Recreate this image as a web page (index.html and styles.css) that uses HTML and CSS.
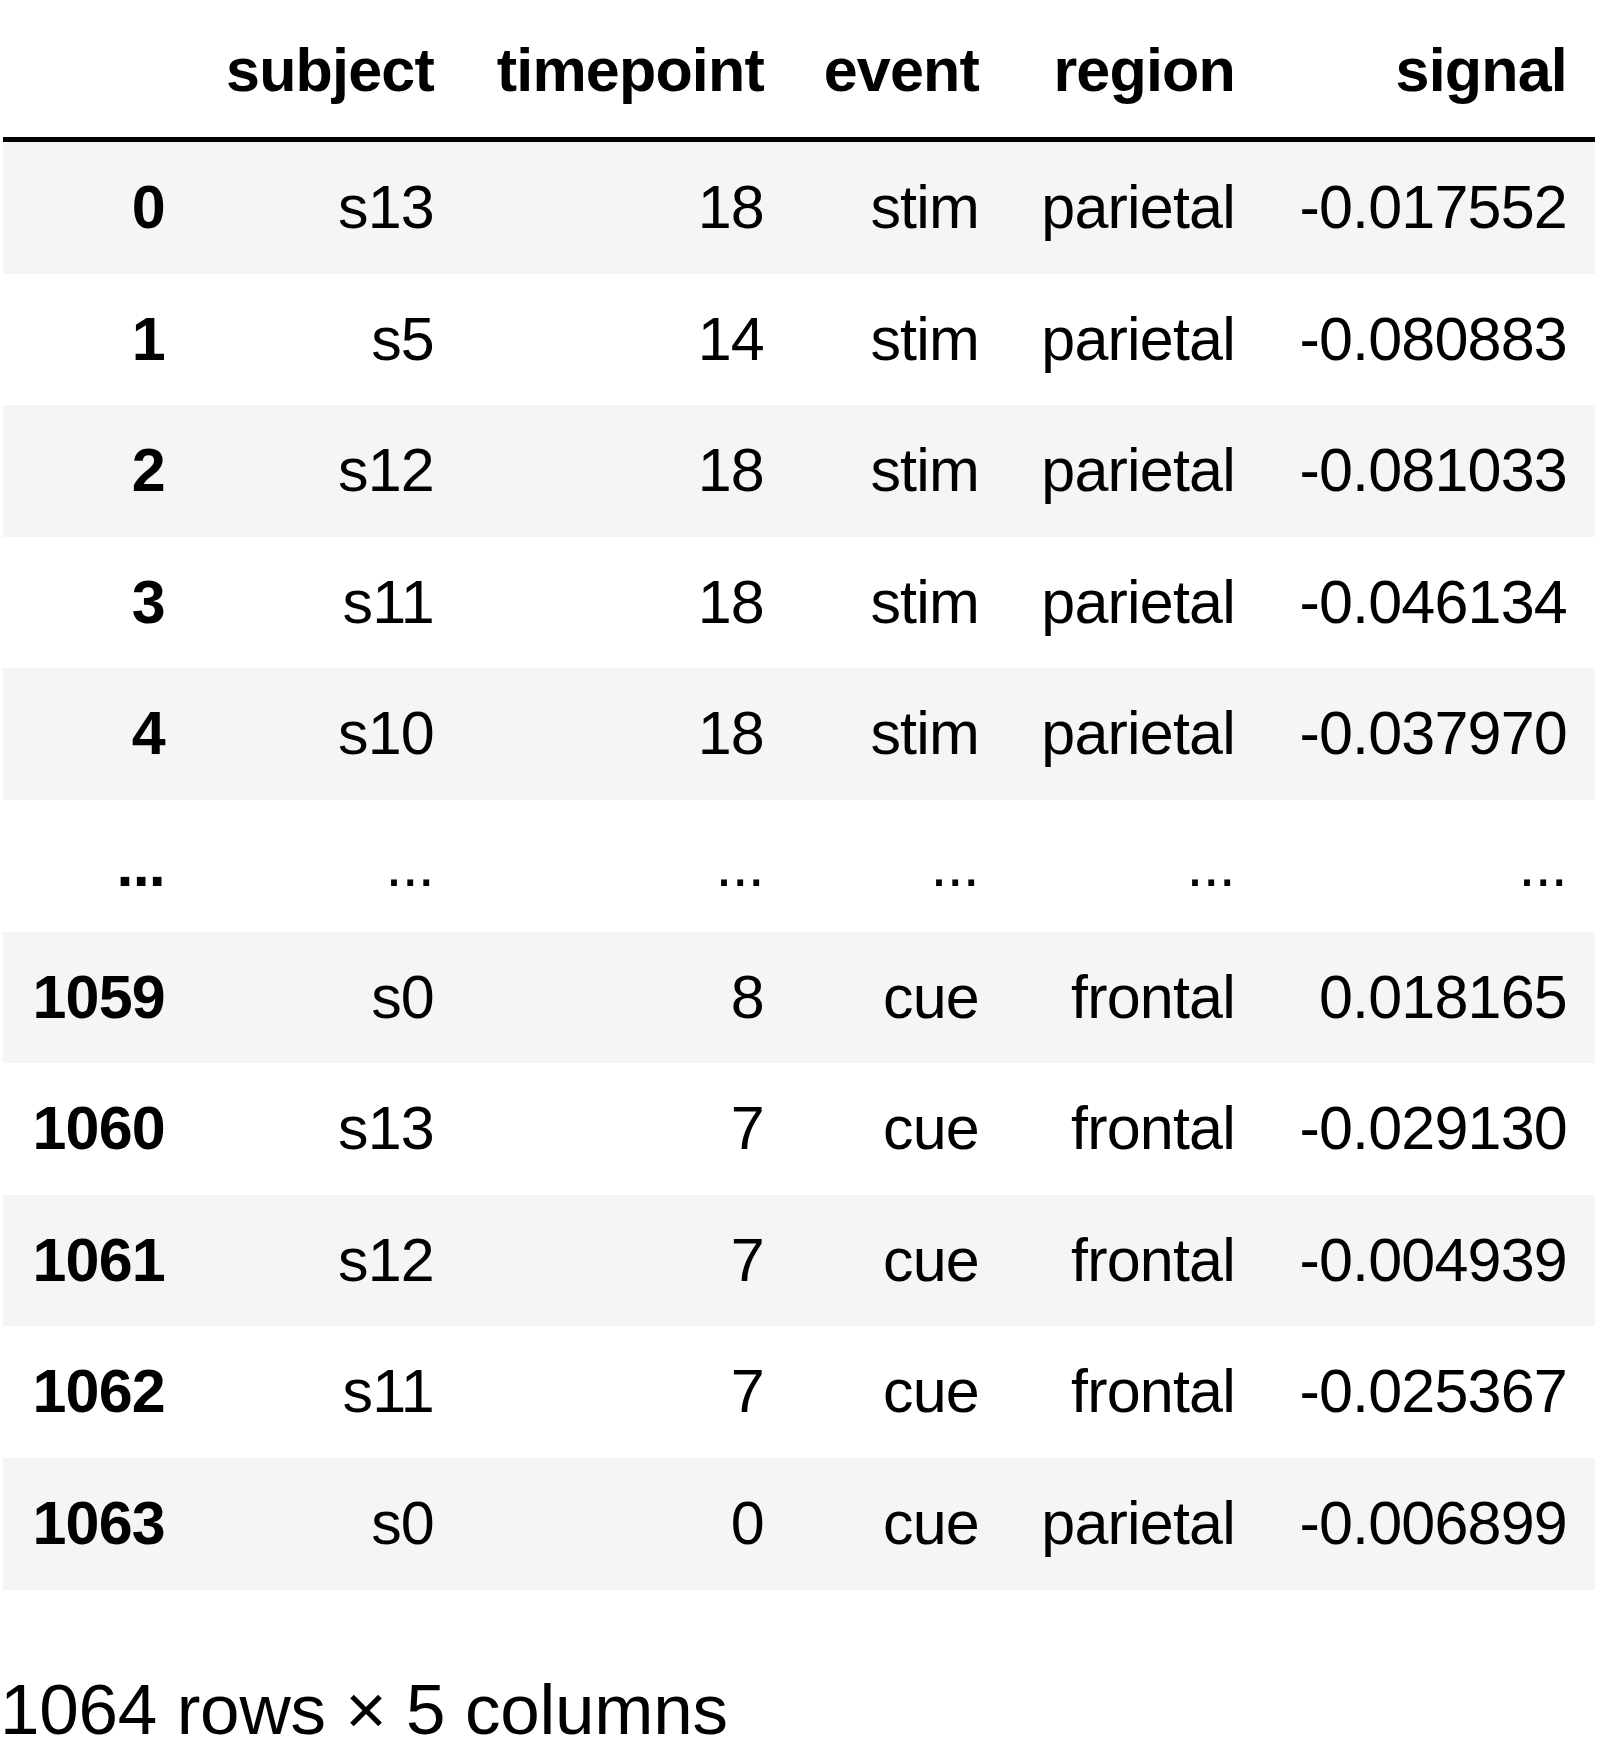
FILE: index.html
```html
<!DOCTYPE html>
<html>
<head>
<meta charset="utf-8">
<link rel="stylesheet" href="styles.css">
</head>
<body>
<div class="output">
<table class="dataframe">
  <colgroup>
    <col class="c-idx"><col class="c-subject"><col class="c-time"><col class="c-event"><col class="c-region"><col class="c-signal">
  </colgroup>
  <thead>
    <tr><th></th><th>subject</th><th>timepoint</th><th>event</th><th>region</th><th>signal</th></tr>
  </thead>
  <tbody>
    <tr><th>0</th><td>s13</td><td>18</td><td>stim</td><td>parietal</td><td>-0.017552</td></tr>
    <tr><th>1</th><td>s5</td><td>14</td><td>stim</td><td>parietal</td><td>-0.080883</td></tr>
    <tr><th>2</th><td>s12</td><td>18</td><td>stim</td><td>parietal</td><td>-0.081033</td></tr>
    <tr><th>3</th><td>s11</td><td>18</td><td>stim</td><td>parietal</td><td>-0.046134</td></tr>
    <tr><th>4</th><td>s10</td><td>18</td><td>stim</td><td>parietal</td><td>-0.037970</td></tr>
    <tr><th>...</th><td>...</td><td>...</td><td>...</td><td>...</td><td>...</td></tr>
    <tr><th>1059</th><td>s0</td><td>8</td><td>cue</td><td>frontal</td><td>0.018165</td></tr>
    <tr><th>1060</th><td>s13</td><td>7</td><td>cue</td><td>frontal</td><td>-0.029130</td></tr>
    <tr><th>1061</th><td>s12</td><td>7</td><td>cue</td><td>frontal</td><td>-0.004939</td></tr>
    <tr><th>1062</th><td>s11</td><td>7</td><td>cue</td><td>frontal</td><td>-0.025367</td></tr>
    <tr><th>1063</th><td>s0</td><td>0</td><td>cue</td><td>parietal</td><td>-0.006899</td></tr>
  </tbody>
</table>
<p class="shape">1064 rows × 5 columns</p>
</div>
</body>
</html>
```
FILE: styles.css
```css
html, body {
  margin: 0;
  padding: 0;
  background: #ffffff;
}

.output {
  padding: 5.4px 0 0 0;
  font-family: "Liberation Sans", Arial, Helvetica, sans-serif;
  color: #000000;
}

.dataframe {
  border-collapse: collapse;
  border-spacing: 0;
  border: none;
  table-layout: fixed;
  width: 1592px;
  margin: 0 0 0 3px;
  font-size: 61px;
  letter-spacing: -0.8px;
}

.c-idx { width: 190px; }
.c-subject { width: 269px; }
.c-time { width: 330px; }
.c-event { width: 215px; }
.c-region { width: 256px; }
.c-signal { width: 332px; }

.dataframe thead {
  border-bottom: 5px solid #000000;
  vertical-align: bottom;
}

.dataframe th,
.dataframe td {
  text-align: right;
  vertical-align: middle;
  padding: 30px 28px 30px 10px;
  line-height: 71.6px;
  white-space: nowrap;
  border: none;
}

.dataframe th {
  font-weight: bold;
}

.dataframe tbody tr:nth-child(odd) {
  background: #f5f5f5;
}

.shape {
  margin: 79px 0 0 0;
  font-size: 71px;
  line-height: 82px;
  letter-spacing: -0.2px;
}
```
